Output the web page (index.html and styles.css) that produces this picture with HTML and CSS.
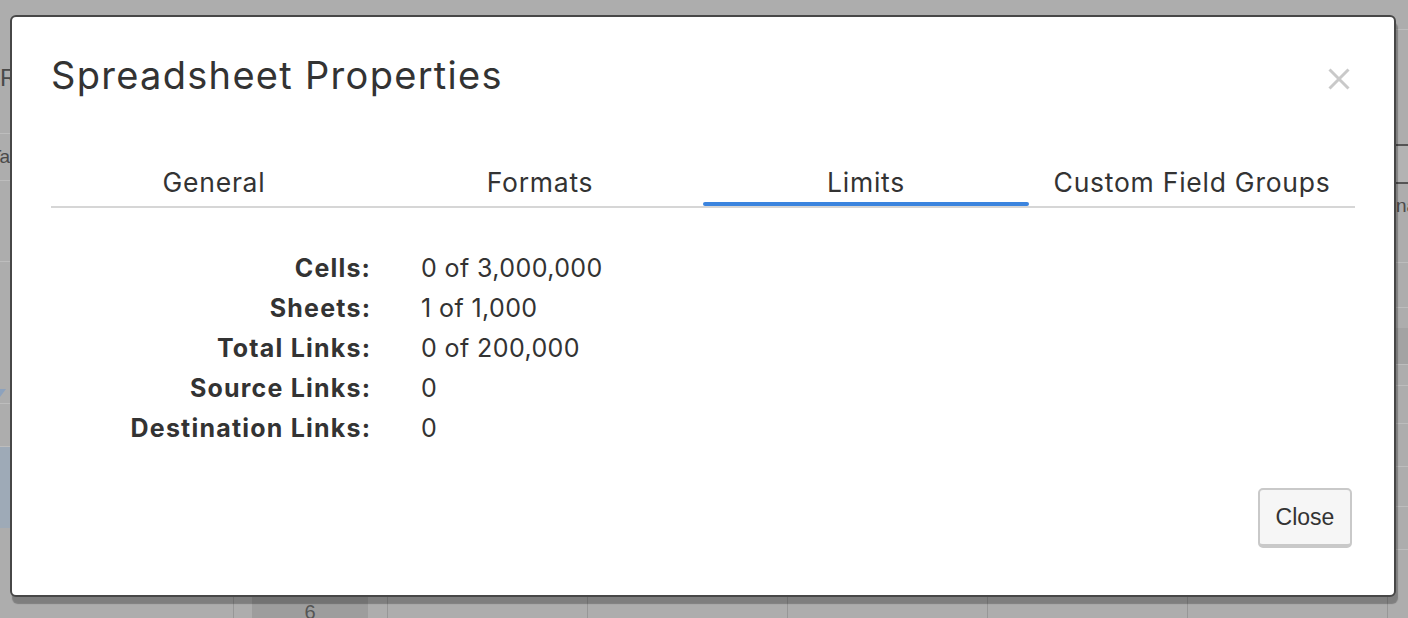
FILE: index.html
```html
<!DOCTYPE html>
<html lang="en">
<head>
<meta charset="utf-8">
<title>Spreadsheet Properties</title>
<link rel="stylesheet" href="styles.css">
</head>
<body>
<div class="app">
  <div class="app-main">
    <div class="edge edge-left">
      <div class="ecell l1"><span class="etext big">R</span></div>
      <div class="ecell l2"><span class="etext">Ta</span></div>
      <div class="ecell l3"></div>
      <div class="ecell l4"><span class="arrow"></span></div>
      <div class="ecell l5"></div>
      <div class="ecell l6"></div>
      <div class="ecell l7"></div>
    </div>
    <div class="app-center"></div>
    <div class="edge edge-right">
      <div class="ecell r0"></div>
      <div class="ecell r1"></div>
      <div class="ebtn"></div>
      <div class="ecell r3"><span class="etext left">na</span></div>
      <div class="ecell r4"></div>
      <div class="ecell r5"></div>
      <div class="ecell r6 band"></div>
      <div class="ecell r7"></div>
      <div class="ecell r8"></div>
      <div class="ecell r9"></div>
      <div class="ecell r10"></div>
      <div class="ecell r11"></div>
      <div class="ecell r12"></div>
    </div>
  </div>
  <div class="app-row">
    <div class="gcell g0"></div>
    <div class="gcell g1"><div class="rowhead">6</div></div>
    <div class="gcell g2"></div>
    <div class="gcell g2"></div>
    <div class="gcell g2"></div>
    <div class="gcell g2"></div>
    <div class="gcell g2"></div>
    <div class="gcell g3"></div>
  </div>
</div>

<div class="modal" role="dialog" aria-labelledby="dlg-title">
  <header class="modal-head">
    <h1 class="modal-title" id="dlg-title">Spreadsheet Properties</h1>
    <button class="modal-x" type="button" aria-label="Close">
      <svg width="22" height="22" viewBox="0 0 22 22" aria-hidden="true">
        <path d="M1.5 1.5 L20.5 20.5 M20.5 1.5 L1.5 20.5" stroke="#c9c9c9" stroke-width="3" fill="none"/>
      </svg>
    </button>
  </header>
  <nav class="tabs">
    <div class="tab">General</div>
    <div class="tab">Formats</div>
    <div class="tab active">Limits</div>
    <div class="tab">Custom Field Groups</div>
  </nav>
  <dl class="limits">
    <dt>Cells:</dt><dd>0 of 3,000,000</dd>
    <dt>Sheets:</dt><dd>1 of 1,000</dd>
    <dt>Total Links:</dt><dd>0 of 200,000</dd>
    <dt>Source Links:</dt><dd>0</dd>
    <dt>Destination Links:</dt><dd>0</dd>
  </dl>
  <footer class="modal-foot">
    <button class="btn" type="button">Close</button>
  </footer>
</div>
</body>
</html>
```

FILE: styles.css
```css
html, body {
  margin: 0;
  padding: 0;
}
body {
  width: 1408px;
  height: 618px;
  overflow: hidden;
  background: #adadad;
  font-family: "Inter", "Noto Sans", sans-serif;
  color: #333;
}

/* ---------- backdrop app (dimmed) ---------- */
.app {
  height: 618px;
  display: flex;
  flex-direction: column;
}
.app-main {
  flex: 1;
  display: flex;
}
.app-center {
  flex: 1;
}
.edge {
  display: flex;
  flex-direction: column;
  overflow: hidden;
}
.edge-left {
  width: 10px;
}
.edge-right {
  width: 12px;
}
.ecell {
  box-sizing: border-box;
  border-bottom: 1px solid #bdbdbd;
  display: flex;
  align-items: center;
  overflow: hidden;
}
.etext {
  font-family: "Liberation Sans", Arial, sans-serif;
  font-size: 19px;
  color: #4a4a4a;
  white-space: nowrap;
  margin-left: auto;
}
.etext.big {
  font-size: 24px;
  margin-top: 22px;
}
.etext.left {
  margin-left: 0;
  margin-right: auto;
  align-self: flex-start;
  margin-top: 11px;
}
.l1 { height: 134px; }
.l2 { height: 47px; justify-content: flex-end; }
.l3 { height: 81px; }
.l4 { height: 142px; align-items: flex-end; }
.l5 { height: 43px; }
.l6 { height: 81px; background: #9eaab7; border-bottom: none; }
.l7 { flex: 1; border-bottom: none; }
.arrow {
  width: 0;
  height: 0;
  border-left: 6px solid transparent;
  border-right: 6px solid transparent;
  border-top: 8px solid #8da2bd;
  margin-left: -6px;
  margin-bottom: 6px;
}
.r0 { height: 30px; }
.r1 { height: 114px; border-bottom: none; }
.ebtn {
  height: 40px;
  box-sizing: border-box;
  border: 2px solid #555;
  border-radius: 4px;
  margin-left: -4px;
  width: 20px;
  background: #b3b3b3;
}
.r3 { height: 79px; align-items: flex-start; }
.r4 { height: 45px; }
.r5 { height: 20px; border-bottom: none; }
.r6 { height: 37px; }
.band { background: #a3a3a3; }
.r7 { height: 21px; }
.r8 { height: 38px; }
.r9 { height: 43px; }
.r10 { height: 40px; }
.r11 { height: 43px; }
.r12 { flex: 1; border-bottom: none; }

.app-row {
  height: 21px;
  display: flex;
}
.gcell {
  box-sizing: border-box;
  border-right: 1px solid #979797;
  height: 100%;
}
.g0 { width: 234px; }
.g1 { width: 154px; padding-left: 18px; }
.g2 { width: 200px; }
.g3 { flex: 1; border-right: none; }
.rowhead {
  width: 116px;
  height: 100%;
  background: #9d9d9d;
  text-align: center;
  font-family: "Liberation Sans", Arial, sans-serif;
  font-size: 20px;
  line-height: 30px;
  color: #555;
}

/* ---------- modal ---------- */
.modal {
  position: absolute;
  left: 10px;
  top: 15px;
  width: 1386px;
  height: 582px;
  box-sizing: border-box;
  background: #fff;
  border: 2px solid #474747;
  border-radius: 6px;
  box-shadow: 2px 7px 1px rgba(0, 0, 0, 0.27);
  padding: 0 39px;
  display: flex;
  flex-direction: column;
}
.modal-head {
  display: flex;
  justify-content: space-between;
  align-items: flex-start;
  padding-top: 36px;
}
.modal-title {
  margin: 0;
  font-size: 38px;
  line-height: 44px;
  letter-spacing: 1.3px;
  font-weight: 400;
  color: #333;
}
.modal-x {
  margin: 15px 5px 0 0;
  padding: 0;
  border: 0;
  background: none;
  width: 22px;
  height: 22px;
  display: flex;
}

.tabs {
  margin-top: 69px;
  display: grid;
  grid-template-columns: repeat(4, 1fr);
  border-bottom: 2px solid #d6d6d6;
}
.tab {
  position: relative;
  text-align: center;
  font-size: 26.5px;
  line-height: 32px;
  padding-bottom: 8px;
  letter-spacing: 0.75px;
  color: #333;
}
.tab.active::after {
  content: "";
  position: absolute;
  left: 0;
  right: 0;
  bottom: 0;
  height: 4px;
  border-radius: 2px;
  background: #3b84de;
}

.limits {
  margin: 40px 0 0;
  display: grid;
  grid-template-columns: 319px auto;
  column-gap: 51px;
  justify-content: start;
  font-size: 25px;
  line-height: 40px;
}
.limits dt {
  text-align: right;
  font-weight: 700;
  letter-spacing: 1.2px;
  margin-right: -1.2px;
  color: #333;
}
.limits dd {
  margin: 0;
  letter-spacing: 0.4px;
  color: #333;
}

.modal-foot {
  margin-top: auto;
  display: flex;
  justify-content: flex-end;
  padding: 0 3px 47px 0;
}
.btn {
  width: 94px;
  height: 60px;
  box-sizing: border-box;
  border: 2px solid #c9c9c9;
  border-bottom-width: 4px;
  border-radius: 5px;
  background: #f6f6f6;
  font-family: "Liberation Sans", Arial, sans-serif;
  font-size: 23px;
  color: #333;
  padding: 0;
}
```
